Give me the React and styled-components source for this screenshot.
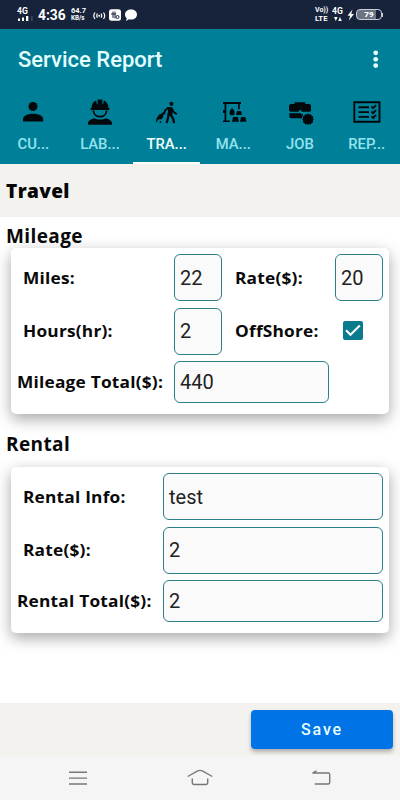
import React from "react";
import styled, { createGlobalStyle } from "styled-components";

const tabs = [
  { label: "CU...", icon: "customer" },
  { label: "LAB...", icon: "labor" },
  { label: "TRA...", icon: "travel", active: true },
  { label: "MA...", icon: "material" },
  { label: "JOB", icon: "job" },
  { label: "REP...", icon: "report" },
];

const icons = {
  customer: (
    <>
      <circle cx="16" cy="9.5" r="4.5" />
      <path d="M6 24.500V22c0-3.400 5.200-5.200 10-5.200s10.200 1.800 10.200 5.200v2.500z" />
    </>
  ),
  labor: (
    <>
      <path d="M7.600 11V10c.2-3.300 2.100-5.500 4.500-6.400l.8 3.600h.8L13.500 2.600h5l-.2 4.600h.8l.8-3.600c2.400 1 4.300 3.200 4.500 6.400v1h1v2H6.600v-2z" />
      <path
        d="M9.300 13.500c.4 3.700 3.200 6.100 6.700 6.100s6.300-2.400 6.700-6.100"
        fill="none"
        stroke="#02090c"
        strokeWidth="1.900"
      />
      <path d="M4 27.800v-1.300c0-2.700 2.400-4.300 6.300-5.300 1.700 1 3.500 1.400 5.700 1.400s4-.4 5.700-1.400c3.900 1 6.300 2.600 6.300 5.300v1.300z" />
    </>
  ),
  travel: (
    <>
      <circle cx="20.400" cy="6.800" r="2.100" />
      <path d="M16.200 10h3.600c1.300 0 2 .8 2.200 2.200l-.8 6.300h-4.900l.8-5z" />
      <g fill="none" stroke="#02090c" strokeLinejoin="round">
        <path d="M17.500 10.800l-3.300 2.400-1.300 4" strokeWidth="2" />
        <path d="M20.800 11l1.500 3.800 3.500 2.400" strokeWidth="2" />
        <path d="M17.600 17.500l-.6 3.500-1.300 5" strokeWidth="2.300" />
        <path d="M19.500 17.500l2.500 3.800 1.200 4.700" strokeWidth="2.300" />
      </g>
      <path d="M8.500 17.300l1.500-.2 2-2.100.8 1.500-1 4.500-2 1.600-2.600-.3-1.400 3H4.900l.8-4.300z" />
      <circle cx="9.500" cy="24.900" r=".9" />
    </>
  ),
  material: (
    <>
      <path d="M6 5h18v2h-1.200v5.300h-1.700V7H9.300v16.500H13V25H6v-1.500h1.500V16H6v-3h1.500V7H6z" />
      <path d="M15.100 11c1.700 2 2.600 3.200 2.600 4.700a2.600 2.600 0 0 1-5.200 0c0-1.500.9-2.700 2.600-4.700z" />
      <path d="M20 14h4l1 4h-6zM16 20h5l1 4.800h-7zM24 20h4.200l1.300 4.800H23z" />
    </>
  ),
  job: (
    <>
      <path d="M10.500 7V5.300h10.800V7H25a2 2 0 0 1 2 2v3.500a2 2 0 0 1-2 2.300h-7.500v-1.500h-2.700v1.500H7a2 2 0 0 1-2-2V9a2 2 0 0 1 2-2z" />
      <path d="M5.300 16.300H17v1h2.500c-1 1.400-1.500 2.300-1.500 4H7.300a2 2 0 0 1-2-2z" />
      <path d="M24 16.500l1.300 1 1.600-.3.700 1.500 1.500.7-.2 1.600.9 1.300-.9 1.300.2 1.600-1.500.7-.7 1.500-1.600-.3-1.300 1-1.300-1-1.600.3-.7-1.500-1.500-.7.2-1.600-.9-1.300.9-1.300-.2-1.600 1.500-.7.7-1.500 1.600.3z" />
    </>
  ),
  report: (
    <g fill="none" stroke="#02090c" strokeWidth="1.900">
      <path d="M3.300 5.300h25.200v19.500H3.300z" />
      <path d="M7.500 10.300H18M7.500 15.100H18M7.500 19.900H18M20.500 9.500l1.600 1.600 3-3M20.500 14.500l1.600 1.600 3-3M20.500 19.300l1.600 1.600 3-3" />
    </g>
  ),
};

const Field = ({ label, value, size, total, short }) => (
  <>
    <Label $total={total}>{label}</Label>
    <Input $size={size} $short={short}>
      {value}
    </Input>
  </>
);

const StatusIcons = () => (
  <StatusBar>
    <Network>
      <Tiny>4G</Tiny>
      <svg width="17" height="5" viewBox="0 0 17 5">
        <path d="M1 2.500h2V5H1zM5 1.500h2V5H5zM9 0h2.300v5H9z" fill="#fff" />
        <path d="M14 0h1.800v5H14z" fill="#3a455c" />
      </svg>
    </Network>
    <Clock>4:36</Clock>
    <Speed>
      <Tiny $size="7.5px">64.7</Tiny>
      <Tiny $size="6.3px">KB/s</Tiny>
    </Speed>
    <svg width="44" height="14" viewBox="0 0 44 14">
      <g fill="none" stroke="#fff" strokeWidth="1.200">
        <path d="M2 4.500c-1.500 2-1.500 4.500 0 6.500M4.500 5.500c-.9 1.300-.9 3 0 4.200M8 5.500c.9 1.300.9 3 0 4.200M10.500 4.500c1.500 2 1.500 4.500 0 6.500" />
      </g>
      <circle cx="6.200" cy="7.700" r="1" fill="#fff" />
      <rect x="16" y="1.200" width="12" height="11.500" rx="2.500" fill="#fff" />
      <g fill="none" stroke="#17223b">
        <path d="M20 3.500v6.500M18 6h5M22 3.500v7" />
        <circle cx="24.500" cy="9" r="1.500" />
      </g>
      <path
        d="M38 1.500c3.500 0 6 2 6 5s-2.500 5-6 5c-.8 0-1.500-.1-2-.3L33 13l.8-2.700c-1.200-1-1.800-2.200-1.800-3.800 0-3 2.500-5 6-5z"
        fill="#fff"
      />
    </svg>
    <Spacer />
    <Volte>
      <Tiny $size="7px">Vo))</Tiny>
      <Tiny $size="7.8px">LTE</Tiny>
    </Volte>
    <Data>
      <Tiny>4G</Tiny>
      <svg width="8" height="4" viewBox="0 0 8 4">
        <path d="M0 0h3.600L1.800 4zM4.200 4h3.600L6 0z" fill="#fff" />
      </svg>
    </Data>
    <svg width="8" height="12" viewBox="0 0 8 12">
      <path d="M5.500.500L.500 6.800h2.700L1.800 11.500 7 5H4.200z" fill="#fff" />
    </svg>
    <Battery>79</Battery>
    <BatteryTip />
  </StatusBar>
);

const App = () => {
  return (
    <Screen>
      <GlobalStyle />
      <StatusIcons />

      <Header>
        <HeaderTitle>Service Report</HeaderTitle>
        <svg width="6" height="20" viewBox="0 0 6 20" fill="#e4ffff">
          <circle cx="2.700" cy="2.800" r="2.400" />
          <circle cx="2.700" cy="9.300" r="2.400" />
          <circle cx="2.700" cy="15.600" r="2.400" />
        </svg>
      </Header>

      <TabBar>
        {tabs.map((tab) => (
          <Tab key={tab.label} $active={tab.active}>
            <svg width="32" height="30" viewBox="0 0 32 30" fill="#02090c">
              {icons[tab.icon]}
            </svg>
            <TabLabel>{tab.label}</TabLabel>
          </Tab>
        ))}
      </TabBar>

      <PageTitle>Travel</PageTitle>

      <Content>
        <SectionTitle $height="31px">Mileage</SectionTitle>
        <Card>
          <MileageRow>
            <Field label="Miles:" value="22" />
            <Field label="Rate($):" value="20" />
          </MileageRow>
          <MileageRow>
            <Field label="Hours(hr):" value="2" />
            <Label>OffShore:</Label>
            <Checkbox>
              <svg width="20" height="19" viewBox="0 0 20 19">
                <path
                  d="M3 9.300l4.500 4.500 9.300-9.300"
                  fill="none"
                  stroke="#fff"
                  strokeWidth="2"
                />
              </svg>
            </Checkbox>
          </MileageRow>
          <TotalRow>
            <Field label="Mileage Total($):" value="440" size="155px" total short />
          </TotalRow>
        </Card>

        <SectionTitle $height="53px">Rental</SectionTitle>
        <Card>
          <RentalRow>
            <Field label="Rental Info:" value="test" />
          </RentalRow>
          <RentalRow>
            <Field label="Rate($):" value="2" />
          </RentalRow>
          <RentalRow>
            <Field label="Rental Total($):" value="2" total short />
          </RentalRow>
        </Card>
      </Content>

      <Footer>
        <SaveButton>Save</SaveButton>
      </Footer>

      <NavBar>
        <svg width="20" height="20" viewBox="0 0 20 20">
          <path d="M1 4.200h18M1 10.100h18M1 16h18" />
        </svg>
        <svg width="28" height="20" viewBox="0 0 28 20">
          <path d="M1.700 8.500l10-5.600q2.300-1 4.600 0l10 5.600M6.300 10.500v4q0 2 2 2h11.400q2 0 2-2v-4" />
        </svg>
        <svg width="20" height="20" viewBox="0 0 20 20">
          <path d="M5.500 2.800L1.500 5h15.700q1.500 0 1.500 1.500v8q0 1.500-1.500 1.500H3.800" />
        </svg>
      </NavBar>
    </Screen>
  );
};

export default App;

const GlobalStyle = createGlobalStyle`
  * {
    box-sizing: border-box;
  }

  body {
    margin: 0;
    background: #fff;
  }

  svg {
    display: block;
    flex: none;
  }
`;

const Screen = styled.div`
  width: 400px;
  height: 800px;
  display: flex;
  flex-direction: column;
  overflow: hidden;
  font-family: Roboto, sans-serif;
  background: #fff;
`;

const StatusBar = styled.div`
  height: 29px;
  flex: none;
  padding: 0 17px;
  display: flex;
  align-items: center;
  color: #fff;
  background: #17223b;
`;

const Tiny = styled.span`
  display: block;
  font-size: ${(props) => props.$size || "8.6px"};
  line-height: 7.5px;
  font-weight: 700;
  white-space: nowrap;
`;

const Network = styled.div`
  width: 21px;
  display: flex;
  flex-direction: column;
  gap: 1px;
`;

const Clock = styled.div`
  width: 33px;
  font-size: 13.8px;
  line-height: 16px;
  font-weight: 700;
  padding-top: 1px;
`;

const Speed = styled.div`
  width: 22px;
`;

const Spacer = styled.div`
  flex: 1;
`;

const Volte = styled.div`
  width: 17px;
`;

const Data = styled.div`
  width: 15px;
  display: flex;
  flex-direction: column;
  gap: 1px;

  svg {
    margin-left: 2px;
  }
`;

const Battery = styled.div`
  width: 26px;
  height: 11px;
  margin-left: 1px;
  border: 1px solid #c8ccd3;
  border-radius: 4px;
  font-size: 8px;
  line-height: 9px;
  font-weight: 900;
  text-align: center;
  background: linear-gradient(90deg, #6c7484 78%, #17223b 78%);
`;

const BatteryTip = styled.div`
  width: 1px;
  height: 4px;
  background: #c8ccd3;
`;

const Header = styled.div`
  height: 61px;
  flex: none;
  padding: 0 21px 0 18px;
  display: flex;
  align-items: center;
  justify-content: space-between;
  background: #008098;
`;

const HeaderTitle = styled.h1`
  margin: 0;
  font-size: 22px;
  font-weight: 500;
  color: #e4ffff;
`;

const TabBar = styled.div`
  height: 74px;
  flex: none;
  display: grid;
  grid-template-columns: repeat(6, 1fr);
  background: #008098;
`;

const Tab = styled.div`
  padding-top: 7px;
  display: flex;
  flex-direction: column;
  align-items: center;
  color: ${(props) => (props.$active ? "#f2ffff" : "#94e3ee")};
  border-bottom: 2px solid ${(props) => (props.$active ? "#fff" : "#008098")};
`;

const TabLabel = styled.span`
  margin-top: 8px;
  font-size: 14.8px;
  line-height: 18px;
  font-weight: 500;
`;

const PageTitle = styled.h2`
  height: 53px;
  flex: none;
  margin: 0;
  padding-left: 6px;
  font: 800 19px/54px "Open Sans", sans-serif;
  letter-spacing: 0.4px;
  color: #050505;
  background: #f3f2ef;
`;

const Content = styled.div`
  flex: 1;
`;

const SectionTitle = styled.h3`
  height: ${(props) => props.$height};
  margin: 0;
  padding: 6px 0 0 6px;
  display: flex;
  align-items: center;
  font: 700 19px/24px "Open Sans", sans-serif;
  letter-spacing: 0.4px;
  color: #090909;
`;

const Card = styled.div`
  height: 166px;
  margin: 0 11px;
  padding: 6px 6px 0;
  display: flex;
  flex-direction: column;
  gap: 6.5px;
  border-radius: 5px;
  background: #fff;
  box-shadow: 0 5px 15px rgba(0, 0, 0, 0.35);
`;

const MileageRow = styled.div`
  display: grid;
  grid-template-columns: 157px 48px 113px 48px;
  align-items: center;
`;

const TotalRow = styled.div`
  display: grid;
  grid-template-columns: 157px 1fr;
  align-items: center;
`;

const RentalRow = styled.div`
  display: grid;
  grid-template-columns: 146px 1fr;
  align-items: center;
`;

const Label = styled.label`
  justify-self: start;
  margin-left: ${(props) => (props.$total ? "0" : "5.5px")};
  font: 700 16px/24px "Open Sans", sans-serif;
  letter-spacing: 0.2px;
  white-space: nowrap;
  color: #090909;
  transform: scaleX(1.08);
  transform-origin: left;

  ${MileageRow} &:nth-child(3) {
    margin-left: 12.5px;
  }
`;

const Input = styled.div`
  width: ${(props) => props.$size || "100%"};
  height: ${(props) => (props.$short ? "42px" : "47px")};
  padding-left: 5px;
  display: flex;
  align-items: center;
  border: 1px solid #2d7f88;
  border-radius: 6px;
  font-size: 20px;
  color: #222;
  background: #fafafa;
`;

const Checkbox = styled.div`
  width: 20px;
  height: 19px;
  justify-self: center;
  margin: 0 12px 2px 0;
  border-radius: 2px;
  background: #087b8e;
`;

const Footer = styled.div`
  height: 53px;
  flex: none;
  padding: 7px 7px 0;
  display: flex;
  justify-content: flex-end;
  background: #f3f2ef;
`;

const SaveButton = styled.button`
  width: 142px;
  height: 39px;
  padding: 0;
  border: 0;
  border-radius: 4px;
  font: 500 16px Roboto, sans-serif;
  letter-spacing: 1.8px;
  color: #e6ffff;
  background: #0073e6;
  box-shadow: 0 3px 4px rgba(0, 0, 0, 0.28);
`;

const NavBar = styled.div`
  height: 44px;
  flex: none;
  padding: 0 69px 0 68px;
  display: flex;
  align-items: center;
  justify-content: space-between;
  background: #f5f5f5;

  path {
    fill: none;
    stroke: #777;
    stroke-width: 1.4;
  }
`;
